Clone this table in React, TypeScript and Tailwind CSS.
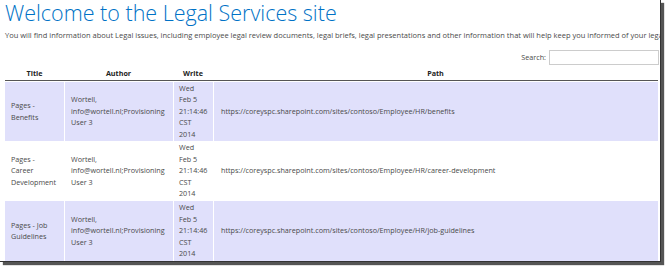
const ROWS = [
  { title: ['Pages -', 'Benefits'], slug: 'benefits', shaded: true },
  { title: ['Pages -', 'Career', 'Development'], slug: 'career-development', shaded: false },
  { title: ['Pages - Job', 'Guidelines'], slug: 'job-guidelines', shaded: true },
];

const AUTHOR = ['Wortell,', 'info@wortell.nl;Provisioning', 'User 3'];
const WRITE = ['Wed', 'Feb 5', '21:14:46', 'CST', '2014'];

function Lines({ lines }: { lines: string[] }) {
  return (
    <>
      {lines.map((l) => (
        <div key={l} className="whitespace-nowrap">
          {l}
        </div>
      ))}
    </>
  );
}

export default function App() {
  return (
    <div className="h-[269px] w-[666px] overflow-hidden bg-white font-['Open_Sans',sans-serif] text-[#4a4a4a]">
      <div className="h-[262px] w-[661px] overflow-hidden border-b border-r border-[#333] bg-white shadow-[3px_3px_1px_#555]">
        <h1 className="ml-[5px] h-[30px] whitespace-nowrap text-[21.5px] font-light leading-[26px] text-[#0072c6]">
          Welcome to the Legal Services site
        </h1>
        <p className="ml-[5px] h-[10px] whitespace-nowrap text-[7.5px] leading-[10px]">
          You will find information about Legal issues, including employee legal review documents, legal briefs, legal
          presentations and other information that will help keep you informed of your legal matters.
        </p>

        {/* search */}
        <div className="mt-[10px] flex h-[15px] items-center justify-end gap-[3px] pr-[1px]">
          <label className="text-[7.2px]">Search:</label>
          <input className="h-[15px] w-[110px] border border-[#ccc] bg-white outline-none" />
        </div>

        <table className="ml-[5px] mt-[1px] w-[653px] table-fixed border-separate border-spacing-0 text-[7.2px] leading-[11.5px]">
          <colgroup>
            <col className="w-[59px]" />
            <col className="w-[109px]" />
            <col className="w-[40px]" />
            <col className="w-[445px]" />
          </colgroup>
          <thead>
            <tr className="font-bold text-[#222]">
              {['Title', 'Author', 'Write', 'Path'].map((h) => (
                <th key={h} className="h-[15px] border-b border-[#555] pb-[1px] text-center align-bottom">
                  {h}
                </th>
              ))}
            </tr>
          </thead>
          <tbody>
            {ROWS.map((r, i) => (
              <tr key={r.slug} className={r.shaded ? 'bg-[#e0e0fb]' : 'bg-white'}>
                <td className={`h-[60px] px-[6px] align-middle ${i === 0 ? 'border-t border-white' : ''}`}>
                  <Lines lines={r.title} />
                </td>
                <td className={`border-l border-white px-[6px] align-middle ${i === 0 ? 'border-t' : ''}`}>
                  <Lines lines={AUTHOR} />
                </td>
                <td className={`border-l border-white px-[5px] align-middle ${i === 0 ? 'border-t' : ''}`}>
                  <Lines lines={WRITE} />
                </td>
                <td className={`border-l border-white pl-[7px] align-middle whitespace-nowrap ${i === 0 ? 'border-t' : ''}`}>
                  https://coreyspc.sharepoint.com/sites/contoso/Employee/HR/{r.slug}
                </td>
              </tr>
            ))}
          </tbody>
        </table>
      </div>
    </div>
  );
}
